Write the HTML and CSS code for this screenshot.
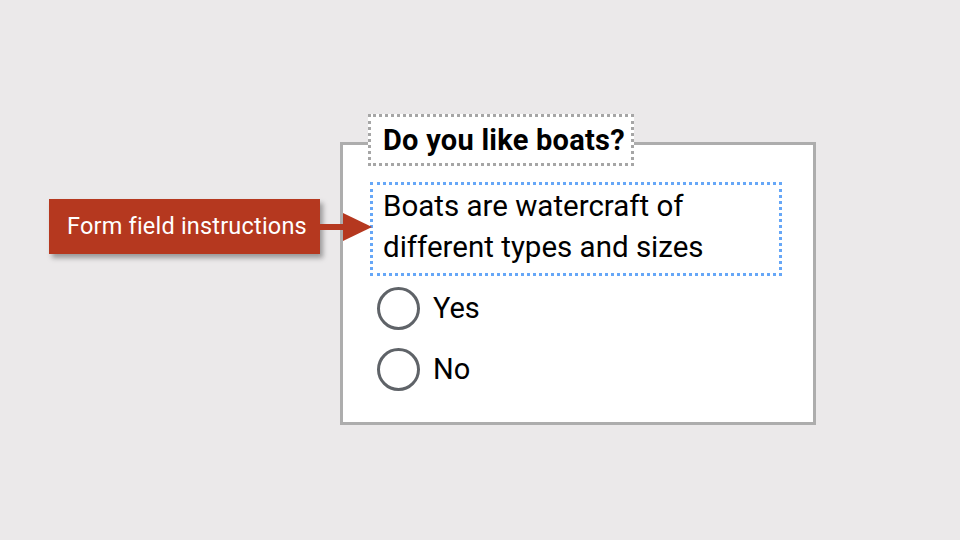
FILE: index.html
```html
<!DOCTYPE html>
<html lang="en">
<head>
<meta charset="utf-8">
<title>Form field instructions</title>
<link rel="stylesheet" href="styles.css">
</head>
<body>
<main class="stage">
  <div class="question" role="group" aria-labelledby="q-title">
    <div class="question-title" id="q-title">Do you like boats?</div>
    <p class="instructions">Boats are watercraft of different types and sizes</p>
    <ul class="options">
      <li class="option"><span class="radio"></span><span class="option-label">Yes</span></li>
      <li class="option"><span class="radio"></span><span class="option-label">No</span></li>
    </ul>
  </div>
  <div class="callout">
    <div class="callout-label">Form field instructions</div>
    <svg class="callout-arrow" width="52" height="28" viewBox="0 0 52 28" aria-hidden="true">
      <rect x="0" y="11" width="25" height="6" fill="#b5381f"/>
      <polygon points="23,0 52,14 23,28" fill="#b5381f"/>
    </svg>
  </div>
</main>
</body>
</html>
```
FILE: styles.css
```css
* { box-sizing: border-box; }

html, body {
  margin: 0;
  padding: 0;
}

body {
  width: 960px;
  height: 540px;
  background: #ebe9ea;
  font-family: Roboto, "Liberation Sans", sans-serif;
  color: #000;
  overflow: hidden;
}

.stage {
  position: relative;
  width: 960px;
  height: 540px;
  padding: 142px 0 0 340px;
}

.question {
  width: 476px;
  height: 283px;
  background: #fff;
  border: 3px solid #adadad;
  display: flex;
  flex-direction: column;
  align-items: flex-start;
}

.question-title {
  margin: -31px 0 0 25px;
  height: 52px;
  padding: 0 6px 0 12px;
  background: #fff;
  border: 3px dotted #a6a6a6;
  font-size: 29px;
  font-weight: 700;
  letter-spacing: 0.25px;
  line-height: 46px;
  white-space: nowrap;
}

.instructions {
  margin: 16px 0 0 27px;
  width: 412px;
  height: 94px;
  padding: 1px 9px 5px 10px;
  border: 3px dotted #66a7f7;
  font-size: 29.5px;
  line-height: 41px;
}

.options {
  list-style: none;
  margin: 11px 0 0 34px;
  padding: 0;
  display: flex;
  flex-direction: column;
  gap: 18px;
}

.option {
  display: flex;
  align-items: center;
  gap: 13px;
  height: 43px;
}

.radio {
  width: 43px;
  height: 43px;
  border: 3px solid #5f6368;
  border-radius: 50%;
  flex: none;
}

.option-label {
  font-size: 29px;
  line-height: 43px;
}

.callout {
  position: absolute;
  left: 49px;
  top: 199px;
  display: flex;
  align-items: center;
}

.callout-label {
  width: 271px;
  height: 55px;
  padding-left: 18px;
  background: #b5381f;
  color: #fff;
  font-size: 23.5px;
  letter-spacing: 0.2px;
  line-height: 55px;
  white-space: nowrap;
  box-shadow: 3px 4px 5px rgba(0, 0, 0, 0.35);
}

.callout-arrow {
  display: block;
  flex: none;
}
```
